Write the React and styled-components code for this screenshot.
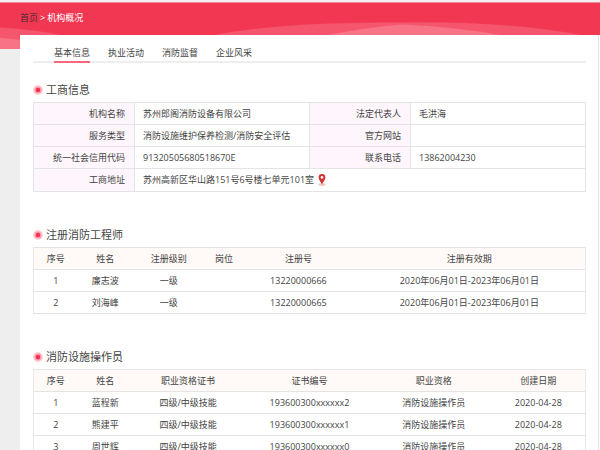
import React, { useState } from 'react';
import styled, { createGlobalStyle } from 'styled-components';

const tabs = ['基本信息', '执业活动', '消防监督', '企业风采'];

const engineers = {
   columns: [
      { label: '序号', width: '8%' },
      { label: '姓名', width: '10%' },
      { label: '注册级别', width: '13%' },
      { label: '岗位', width: '7%' },
      { label: '注册号', width: '20%' },
      { label: '注册有效期', width: '42%' },
   ],
   rows: [
      ['1', '廉志波', '一级', '', '13220000666', '2020年06月01日-2023年06月01日'],
      ['2', '刘海峰', '一级', '', '13220000665', '2020年06月01日-2023年06月01日'],
   ],
};

const operators = {
   columns: [
      { label: '序号', width: '8%' },
      { label: '姓名', width: '10%' },
      { label: '职业资格证书', width: '20%' },
      { label: '证书编号', width: '24%' },
      { label: '职业资格', width: '21%' },
      { label: '创建日期', width: '17%' },
   ],
   rows: [
      ['1', '蓝程新', '四级/中级技能', '193600300xxxxxx2', '消防设施操作员', '2020-04-28'],
      ['2', '熊建平', '四级/中级技能', '193600300xxxxxx1', '消防设施操作员', '2020-04-28'],
      ['3', '周世辉', '四级/中级技能', '193600300xxxxxx0', '消防设施操作员', '2020-04-28'],
   ],
};

const SectionTitle = ({ children }) => (
   <Title>
      <svg width="10" height="10" viewBox="0 0 10 10" aria-hidden="true">
         <circle cx="5" cy="5" r="5" fill="#fdd3da" />
         <circle cx="5" cy="5" r="3.6" fill="#fa9cab" />
         <circle cx="5" cy="5" r="2.2" fill="#f2324f" />
      </svg>
      {children}
   </Title>
);

const ListTable = ({ data }) => (
   <Table>
      <colgroup>
         {data.columns.map((column) => <Col key={column.label} $width={column.width} />)}
      </colgroup>
      <thead>
         <tr>
            {data.columns.map((column) => <HeadCell key={column.label}>{column.label}</HeadCell>)}
         </tr>
      </thead>
      <tbody>
         {data.rows.map((row) => (
            <tr key={row[0]}>
               {row.map((value, i) => <ListCell key={i}>{value}</ListCell>)}
            </tr>
         ))}
      </tbody>
   </Table>
);

const App = () => {
   const [active, setActive] = useState(tabs[0]);

   return (
      <>
         <GlobalStyle />
         <Banner>
            <Waves viewBox="0 0 600 46" preserveAspectRatio="none" aria-hidden="true">
               <path d="M0 25 Q35 27 64 33 V46 H0Z" fill="#f5566d" />
               <path d="M0 35 Q14 36 30 39 V46 H0Z" fill="#f77385" />
               <path d="M210 33 C270 22 330 20 400 20 C470 19 530 23 586 33Z" fill="#f5566d" />
               <path d="M324 33 Q365 25 402 22 Q455 24 504 33Z" fill="#f77385" />
            </Waves>
            <Breadcrumb aria-label="breadcrumb">
               <a href="#home">首页</a>
               <span>&gt;</span>
               <span>机构概况</span>
            </Breadcrumb>
         </Banner>

         <Panel>
            <Tabs>
               {tabs.map((tab) => (
                  <Tab key={tab} $active={tab === active} onClick={() => setActive(tab)}>{tab}</Tab>
               ))}
            </Tabs>

            <Section>
               <SectionTitle>工商信息</SectionTitle>
               <Table>
                  <colgroup>
                     <Col $width="101px" />
                     <Col $width="auto" />
                     <Col $width="101px" />
                     <Col $width="auto" />
                  </colgroup>
                  <tbody>
                     <tr>
                        <LabelCell scope="row">机构名称</LabelCell>
                        <InfoCell>苏州郎阁消防设备有限公司</InfoCell>
                        <LabelCell scope="row">法定代表人</LabelCell>
                        <InfoCell>毛洪海</InfoCell>
                     </tr>
                     <tr>
                        <LabelCell scope="row">服务类型</LabelCell>
                        <InfoCell>消防设施维护保养检测/消防安全评估</InfoCell>
                        <LabelCell scope="row">官方网站</LabelCell>
                        <InfoCell />
                     </tr>
                     <tr>
                        <LabelCell scope="row">统一社会信用代码</LabelCell>
                        <InfoCell>91320505680518670E</InfoCell>
                        <LabelCell scope="row">联系电话</LabelCell>
                        <InfoCell>13862004230</InfoCell>
                     </tr>
                     <AddressRow>
                        <LabelCell scope="row">工商地址</LabelCell>
                        <InfoCell colSpan={3}>
                           <Address>
                              苏州高新区华山路151号6号楼七单元101室
                              <svg width="8" height="12" viewBox="0 0 8 12" aria-hidden="true">
                                 <ellipse cx="4" cy="10.6" rx="3.6" ry="1.3" fill="#f6c3c3" />
                                 <path fillRule="evenodd" d="M4 0a3.4 3.4 0 0 1 3.4 3.4C7.4 6 4.8 8 4 10.6 3.2 8 .6 6 .6 3.4A3.4 3.4 0 0 1 4 0Zm0 2a1.4 1.4 0 1 0 0 2.8A1.4 1.4 0 0 0 4 2Z" fill="#d6302f" />
                              </svg>
                           </Address>
                        </InfoCell>
                     </AddressRow>
                  </tbody>
               </Table>
            </Section>

            <Section>
               <SectionTitle>注册消防工程师</SectionTitle>
               <ListTable data={engineers} />
            </Section>

            <Section>
               <SectionTitle>消防设施操作员</SectionTitle>
               <ListTable data={operators} />
            </Section>
         </Panel>
      </>
   );
}

const GlobalStyle = createGlobalStyle`
   * {
      box-sizing: border-box;
   }
   html {
      overflow-x: hidden;
      scrollbar-width: none;
   }
   body {
      margin: 0;
      background: #eee;
      color: #444;
      font: 9px/12px "Open Sans", "Noto Sans CJK SC", sans-serif;
   }
`;

const Banner = styled.header`
   position: relative;
   height: 49px;
   padding: 10px 20px 0;
   background: #f23753;
   border-top: 2px solid #f1eff2;
   box-shadow: inset 0 1px #f58a9b;
`;

const Waves = styled.svg`
   position: absolute;
   inset: 0;
   width: 100%;
   height: 100%;
`;

const Breadcrumb = styled.nav`
   position: relative;
   display: flex;
   gap: 2px;
   color: #fff;
   a {
      color: #4a2a30;
      text-decoration: none;
   }
`;

const Panel = styled.main`
   position: relative;
   margin: -14px 1px 0 20px;
   padding: 12px 12px 20px 13px;
   background: #fff;
   border-right: 1px solid #e4e4e4;
   box-shadow: 1px 0 #fff;
`;

const Tabs = styled.nav`
   display: flex;
   gap: 18px;
   padding-left: 21px;
   border-bottom: 2px solid #eee;
`;

const Tab = styled.button`
   margin-bottom: -2px;
   padding: 0 0 2px;
   background: none;
   border: 0;
   border-bottom: 2px solid ${({ $active }) => ($active ? '#f9677d' : 'transparent')};
   color: #444;
   font: inherit;
   cursor: pointer;
`;

const Section = styled.section`
   margin-top: 19px;
   & + & {
      margin-top: 35px;
   }
`;

const Title = styled.h2`
   display: flex;
   align-items: center;
   gap: 3px;
   margin: 0 0 4px;
   font-size: 11px;
   line-height: 16px;
   font-weight: 400;
`;

const Table = styled.table`
   width: 100%;
   table-layout: fixed;
   border-collapse: collapse;
`;

const Col = styled.col`
   width: ${({ $width }) => $width};
`;

const HeadCell = styled.th`
   height: 22px;
   padding: 0;
   background: #fff9f7;
   border-top: 1px solid #e4e4e4;
   border-bottom: 1px solid #e4e4e4;
   font-weight: 400;
   &:first-child {
      border-left: 1px solid #e9e9e9;
   }
   &:last-child {
      border-right: 1px solid #e9e9e9;
   }
`;

const ListCell = styled.td`
   height: 22px;
   padding: 0;
   border-bottom: 1px solid #e4e4e4;
   text-align: center;
   white-space: nowrap;
   &:first-child {
      border-left: 1px solid #e9e9e9;
   }
   &:last-child {
      border-right: 1px solid #e9e9e9;
   }
`;

const LabelCell = styled.th`
   height: 22px;
   padding: 0 9px;
   background: #fef6fc;
   border: 1px solid #e4e4e4;
   font-weight: 400;
   text-align: right;
   white-space: nowrap;
`;

const InfoCell = styled.td`
   height: 22px;
   padding: 0 8px;
   border: 1px solid #e4e4e4;
   white-space: nowrap;
`;

const AddressRow = styled.tr`
   height: 23px;
`;

const Address = styled.span`
   display: flex;
   align-items: center;
   gap: 4px;
`;

export default React.memo(App);
